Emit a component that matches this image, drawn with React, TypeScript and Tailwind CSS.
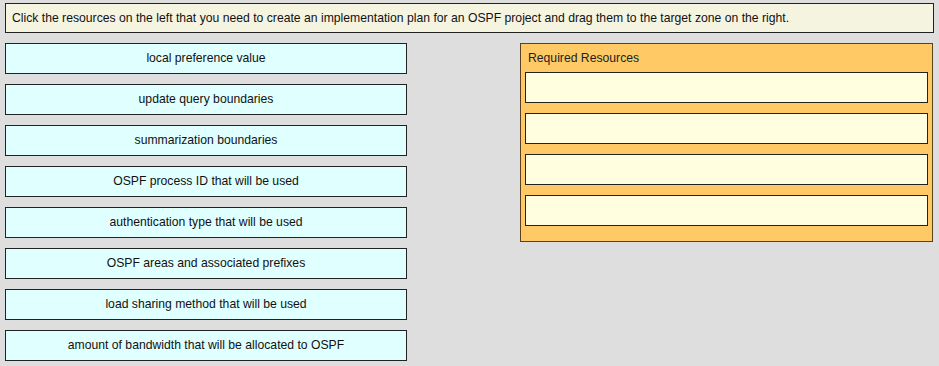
import React from 'react';

const resources = [
  'local preference value',
  'update query boundaries',
  'summarization boundaries',
  'OSPF process ID that will be used',
  'authentication type that will be used',
  'OSPF areas and associated prefixes',
  'load sharing method that will be used',
  'amount of bandwidth that will be allocated to OSPF',
];

const App = () => {
  return (
    <div
      className="w-[939px] h-[366px] bg-[#dedede] pt-[3px] pl-[5px] text-[12.2px] text-[#111]"
      style={{ fontFamily: '"Liberation Sans", Arial, sans-serif' }}
    >
      {/* Instructions */}
      <div className="w-[929px] h-[30px] bg-[#f5f4e1] border border-[#222] flex items-center pl-[6px]">
        Click the resources on the left that you need to create an implementation plan for an OSPF project and drag them to the target zone on the right.
      </div>

      <div className="flex mt-[10px]">
        {/* Source items */}
        <div className="flex flex-col gap-[10px] w-[402px]">
          {resources.map((r) => (
            <div
              key={r}
              className="h-[31px] bg-[#e0ffff] border border-[#222] flex items-center justify-center pb-px"
            >
              {r}
            </div>
          ))}
        </div>

        {/* Target zone */}
        <div className="ml-[113px] w-[413px] h-[199px] bg-[#ffca66] border border-[#5a4220] px-[4px]">
          <div className="h-[28px] pt-[5px] pl-[3px] text-[#222]">Required Resources</div>
          <div className="flex flex-col gap-[10px]">
            {[0, 1, 2, 3].map((i) => (
              <div key={i} className="h-[31px] bg-[#ffffe0] border border-[#222]" />
            ))}
          </div>
        </div>
      </div>
    </div>
  );
};

export default App;
